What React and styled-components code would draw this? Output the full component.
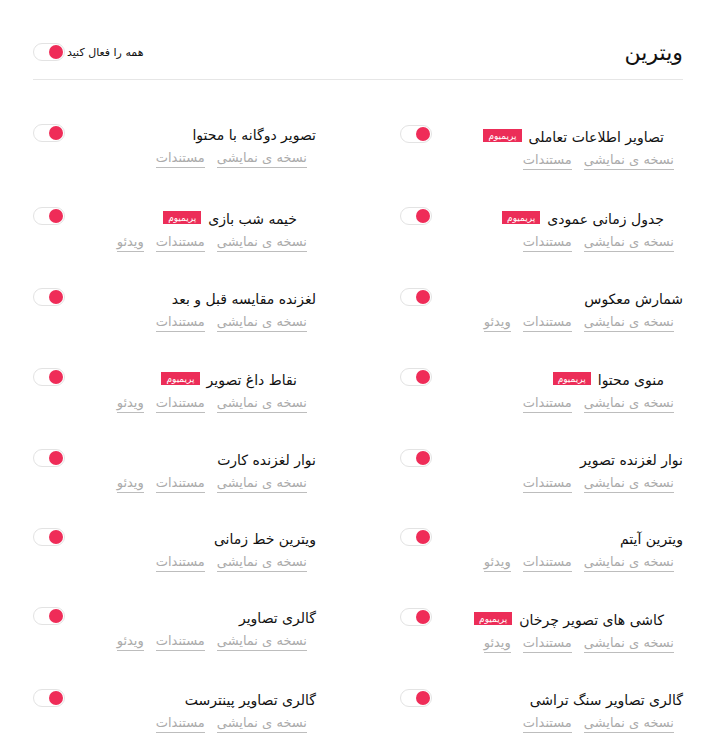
import React from "react";
import styled, { createGlobalStyle } from "styled-components";

const GlobalStyle = createGlobalStyle`
  html, body {
    margin: 0;
    padding: 0;
    background: #fff;
  }
  body {
    font-family: "DejaVu Sans", "Noto Sans", sans-serif;
    color: #111;
  }
`;

const Page = styled.div`
  direction: rtl;
  width: 650px;
  margin: 0 auto;
  padding: 36px 39px 0 33px;
  box-sizing: content-box;
`;

const Header = styled.div`
  display: flex;
  align-items: center;
  justify-content: space-between;
  height: 32px;
  padding-bottom: 11px;
  border-bottom: 1px solid #e6e6e6;
`;

const Title = styled.h1`
  margin: 0;
  font-size: 22px;
  font-weight: 400;
  color: #111;
`;

const AllToggle = styled.label`
  display: flex;
  align-items: center;
  gap: 2px;
  font-size: 11px;
  color: #111;
`;

const Switch = styled.span`
  position: relative;
  display: inline-block;
  flex: none;
  width: 30px;
  height: 16px;
  border: 1px solid #e3e3e3;
  border-radius: 10px;
  background: #fff;

  &::after {
    content: "";
    position: absolute;
    top: 1px;
    left: ${(p) => (p.$on ? "15px" : "1px")};
    width: 14px;
    height: 14px;
    border-radius: 50%;
    background: #ef2c58;
  }
`;

const Grid = styled.div`
  display: grid;
  grid-template-columns: 283px 283px;
  column-gap: 84px;
  padding-top: 44px;
`;

const Item = styled.div`
  display: flex;
  align-items: flex-start;
  justify-content: space-between;
  height: ${(p) => (p.$tall ? "82px" : "79px")};
`;

const Texts = styled.div`
  display: flex;
  flex-direction: column;
  align-items: flex-start;
  gap: 3px;
`;

const ItemTitle = styled.div`
  display: flex;
  align-items: flex-start;
  gap: 7px;
  font-size: 14px;
  line-height: 22px;
  padding-top: ${(p) => (p.$premium ? "2px" : "0")};
  margin-right: ${(p) => (p.$premium ? "19px" : "0")};
`;

const Badge = styled.span`
  display: inline-block;
  margin-top: 3px;
  padding: 0 5px;
  height: 13px;
  line-height: 14px;
  font-size: 9px;
  color: #fff;
  background: #ec2d58;
`;

const Links = styled.div`
  display: flex;
  gap: 12px;
  padding-right: 9px;
`;

const DocLink = styled.a`
  font-size: 13px;
  line-height: 18px;
  color: #ababab;
  text-decoration: none;
  border-bottom: 1px solid #bdbdbd;
`;

const SwitchWrap = styled.div`
  padding-top: ${(p) => (p.$premium ? "1px" : "0")};
`;

const items = [
  { title: "تصاویر اطلاعات تعاملی", premium: true, video: false },
  { title: "تصویر دوگانه با محتوا", premium: false, video: false },
  { title: "جدول زمانی عمودی", premium: true, video: false },
  { title: "خیمه شب بازی", premium: true, video: true },
  { title: "شمارش معکوس", premium: false, video: true },
  { title: "لغزنده مقایسه قبل و بعد", premium: false, video: false },
  { title: "منوی محتوا", premium: true, video: false },
  { title: "نقاط داغ تصویر", premium: true, video: true },
  { title: "نوار لغزنده تصویر", premium: false, video: false },
  { title: "نوار لغزنده کارت", premium: false, video: true },
  { title: "ویترین آیتم", premium: false, video: true },
  { title: "ویترین خط زمانی", premium: false, video: false },
  { title: "کاشی های تصویر چرخان", premium: true, video: true },
  { title: "گالری تصاویر", premium: false, video: true },
  { title: "گالری تصاویر سنگ تراشی", premium: false, video: false },
  { title: "گالری تصاویر پینترست", premium: false, video: false },
];

function WidgetItem({ item, tall }) {
  return (
    <Item $tall={tall}>
      <Texts>
        <ItemTitle $premium={item.premium}>
          <span>{item.title}</span>
          {item.premium && <Badge>پریمیوم</Badge>}
        </ItemTitle>
        <Links>
          <DocLink href="#">نسخه ی نمایشی</DocLink>
          <DocLink href="#">مستندات</DocLink>
          {item.video && <DocLink href="#">ویدئو</DocLink>}
        </Links>
      </Texts>
      <SwitchWrap $premium={item.premium}>
        <Switch $on />
      </SwitchWrap>
    </Item>
  );
}

export default function App() {
  return (
    <>
      <GlobalStyle />
      <Page>
        <Header>
          <Title>ویترین</Title>
          <AllToggle>
            همه را فعال کنید
            <Switch $on />
          </AllToggle>
        </Header>
        <Grid>
          {items.map((item, i) => {
            const pair = items[i % 2 === 0 ? i + 1 : i - 1];
            const tall = item.premium || pair.premium;
            return <WidgetItem key={i} item={item} tall={tall} />;
          })}
        </Grid>
      </Page>
    </>
  );
}
